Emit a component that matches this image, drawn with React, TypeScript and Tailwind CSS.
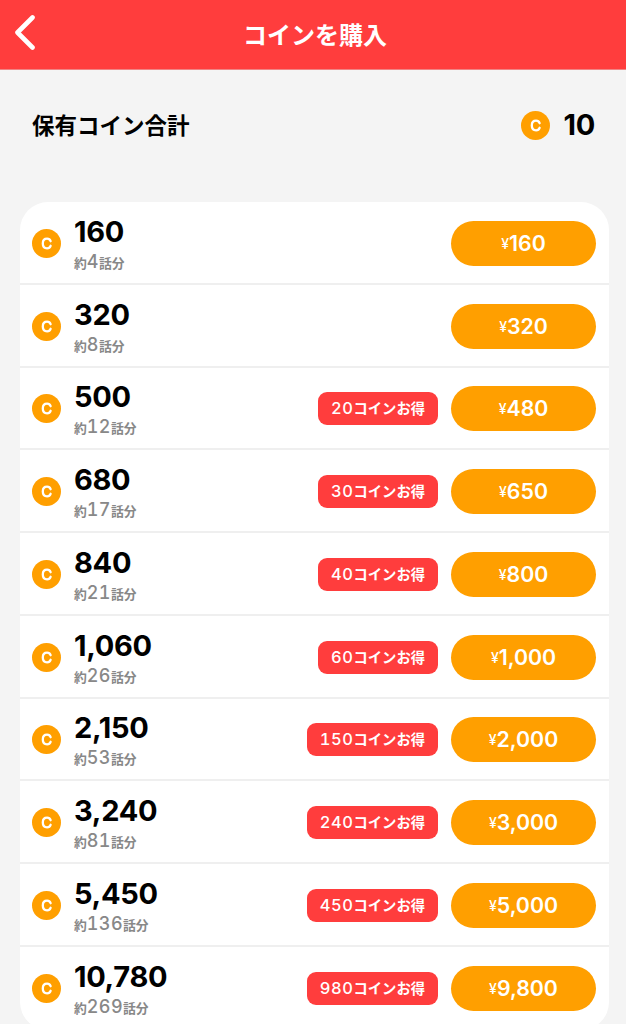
const plans = [
  { coins: '160', episodes: '4', bonus: null, price: '160' },
  { coins: '320', episodes: '8', bonus: null, price: '320' },
  { coins: '500', episodes: '12', bonus: '20', price: '480' },
  { coins: '680', episodes: '17', bonus: '30', price: '650' },
  { coins: '840', episodes: '21', bonus: '40', price: '800' },
  { coins: '1,060', episodes: '26', bonus: '60', price: '1,000' },
  { coins: '2,150', episodes: '53', bonus: '150', price: '2,000' },
  { coins: '3,240', episodes: '81', bonus: '240', price: '3,000' },
  { coins: '5,450', episodes: '136', bonus: '450', price: '5,000' },
  { coins: '10,780', episodes: '269', bonus: '980', price: '9,800' },
];

function CoinIcon() {
  return (
    <svg width="29" height="29" viewBox="0 0 29 29" fill="none" className="shrink-0">
      <circle cx="14.5" cy="14.5" r="14.5" fill="#ff9f00" />
      <path d="M18.6 12.2C18 10.5 16.7 9.7 15.1 9.7C12.5 9.7 10.8 11.6 10.8 14.5C10.8 17.4 12.5 19.3 15.1 19.3C16.7 19.3 18 18.5 18.6 16.8" stroke="white" strokeWidth="2.3" strokeLinecap="round" />
    </svg>
  );
}

export default function App() {
  return (
    <div className="h-screen overflow-hidden bg-[#f4f4f4] text-black font-['Inter','Noto_Sans_CJK_JP',sans-serif]">
      <header className="grid h-[70px] grid-cols-[60px_1fr_56px] items-center border-b border-[#f08484] bg-[#ff3d3d] text-white">
        <button className="pl-[14px] pb-1">
          <svg width="22" height="36" viewBox="0 0 22 36" fill="none">
            <path d="M18.5 2.5L3.5 17.5L18.5 32.5" stroke="currentColor" strokeWidth="4.6" strokeLinecap="round" strokeLinejoin="round" />
          </svg>
        </button>
        <h1 className="pt-[3px] text-center text-2xl font-bold">コインを購入</h1>
      </header>

      <div className="flex h-[132px] items-start justify-between pl-8 pr-[31px] pt-[37px]">
        <h2 className="pt-px text-[22.5px] leading-[36px] font-bold">保有コイン合計</h2>
        <div className="flex items-center gap-[14px]">
          <CoinIcon />
          <span className="text-[29px] leading-[36px] font-bold tracking-[-0.3px]">10</span>
        </div>
      </div>

      <ul className="ml-5 mr-[17px] overflow-hidden rounded-[28px] bg-white">
        {plans.map((plan) => (
          <li key={plan.coins} className="flex h-[82.75px] items-center border-b-2 border-[#efefef] pt-0.5 pl-3 pr-[13px] last:border-transparent">
            <CoinIcon />
            <div className="ml-[13px] flex-1 pt-[3px]">
              <div className="text-[29px] leading-[34px] font-bold tracking-[-0.3px]">{plan.coins}</div>
              <div className="flex h-[26px] items-baseline text-[12.8px] leading-[26px] font-bold text-[#888888]">
                約<span className="text-[18px] leading-[26px] font-medium tabular-nums tracking-[0.4px]">{plan.episodes}</span>話分
              </div>
            </div>
            {plan.bonus && (
              <div className="mr-[13px] flex h-[33px] items-baseline rounded-[9px] bg-[#ff3d3d] px-[13px] text-[14.3px] leading-[33px] font-bold text-white">
                <span className="text-[16.5px] leading-[33px] font-medium tabular-nums tracking-[0.6px]">{plan.bonus}</span>コインお得
              </div>
            )}
            <button className="flex h-[45px] w-[145px] items-center justify-center rounded-[23px] bg-[#ff9f00] text-white">
              <span className="text-sm leading-[45px] font-medium">¥</span>
              <span className="text-[21.3px] leading-[45px] font-semibold">{plan.price}</span>
            </button>
          </li>
        ))}
      </ul>
    </div>
  );
}
